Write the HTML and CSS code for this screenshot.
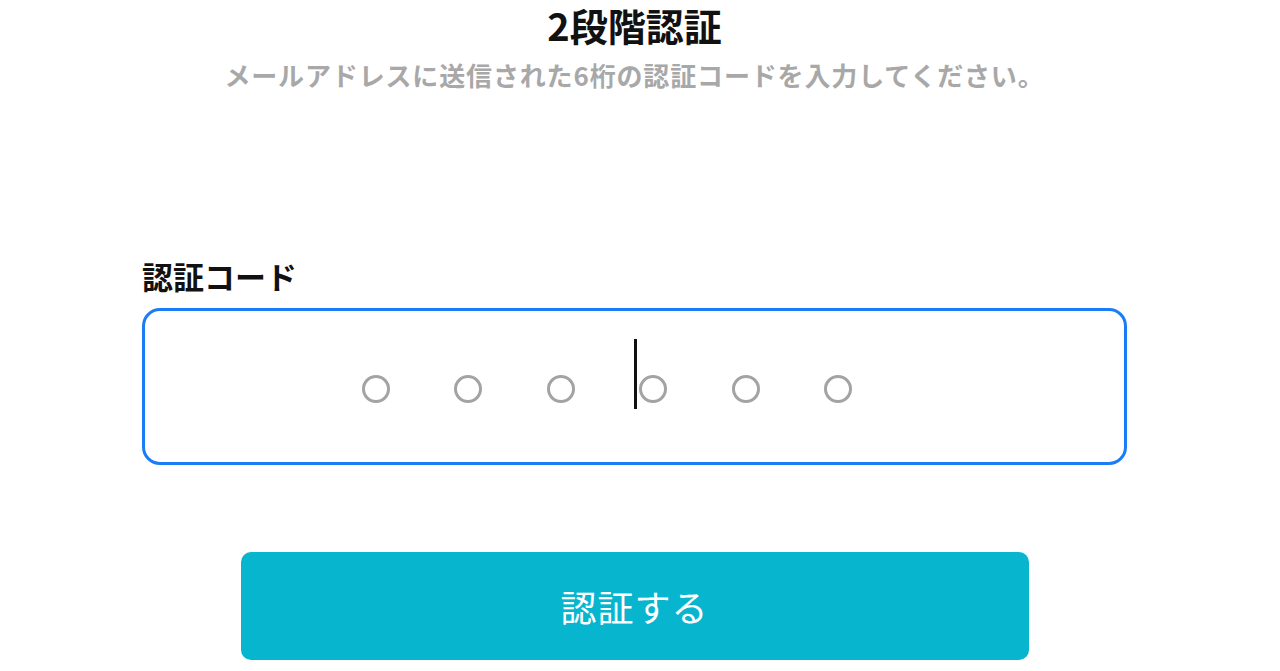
FILE: index.html
```html
<!DOCTYPE html>
<html lang="ja">
<head>
<meta charset="utf-8">
<link rel="stylesheet" href="styles.css">
</head>
<body>
<main class="page">
  <h1 class="title">2段階認証</h1>
  <p class="lead">メールアドレスに送信された6桁の認証コードを入力してください。</p>
  <section class="field">
    <label class="label">認証コード</label>
    <div class="input">
      <div class="dots">
        <span class="dot"></span>
        <span class="dot"></span>
        <span class="dot"></span>
        <span class="dot caret-host"><span class="caret"></span></span>
        <span class="dot"></span>
        <span class="dot"></span>
      </div>
    </div>
  </section>
  <div class="actions">
    <button class="btn">認証する</button>
  </div>
</main>
</body>
</html>
```
FILE: styles.css
```css
* { box-sizing: border-box; }
html, body { margin: 0; padding: 0; background: #fff; }
body {
  font-family: "Noto Sans CJK JP", "Noto Sans", sans-serif;
  color: #111;
  overflow: hidden;
}
.page {
  width: 985px;
  margin: 0 0 0 142px;
  display: flex;
  flex-direction: column;
}
.title {
  margin: 0;
  padding-top: 3px;
  text-align: center;
  font-size: 38px;
  line-height: 44px;
  font-weight: 700;
  color: #111;
}
.lead {
  margin: 9px 0 0;
  text-align: center;
  font-size: 26px;
  line-height: 38px;
  font-weight: 700;
  color: #a8a8a8;
  letter-spacing: 0.85px;
}
.field {
  margin-top: 162px;
  display: flex;
  flex-direction: column;
}
.label {
  font-size: 31px;
  line-height: 40px;
  font-weight: 700;
  color: #111;
}
.input {
  margin-top: 12px;
  height: 157px;
  border: 3px solid #1a7cf6;
  border-radius: 18px;
  display: flex;
  align-items: center;
  justify-content: center;
  padding-top: 4px;
  padding-right: 55px;
}
.dots {
  display: flex;
  gap: 64.5px;
}
.dot {
  width: 28px;
  height: 28px;
  border: 3px solid #a3a3a3;
  border-radius: 50%;
}
.caret-host { position: relative; }
.caret {
  position: absolute;
  left: -8px;
  top: -39px;
  width: 3px;
  height: 70px;
  background: #111;
}
.actions {
  margin-top: 87px;
  display: flex;
  justify-content: center;
}
.btn {
  width: 788px;
  height: 108px;
  border: none;
  border-radius: 10px;
  background: #08b5cf;
  color: #fff;
  font-family: "Noto Sans CJK JP", "Noto Sans", sans-serif;
  font-size: 36px;
  font-weight: 400;
  letter-spacing: 1px;
}
```
